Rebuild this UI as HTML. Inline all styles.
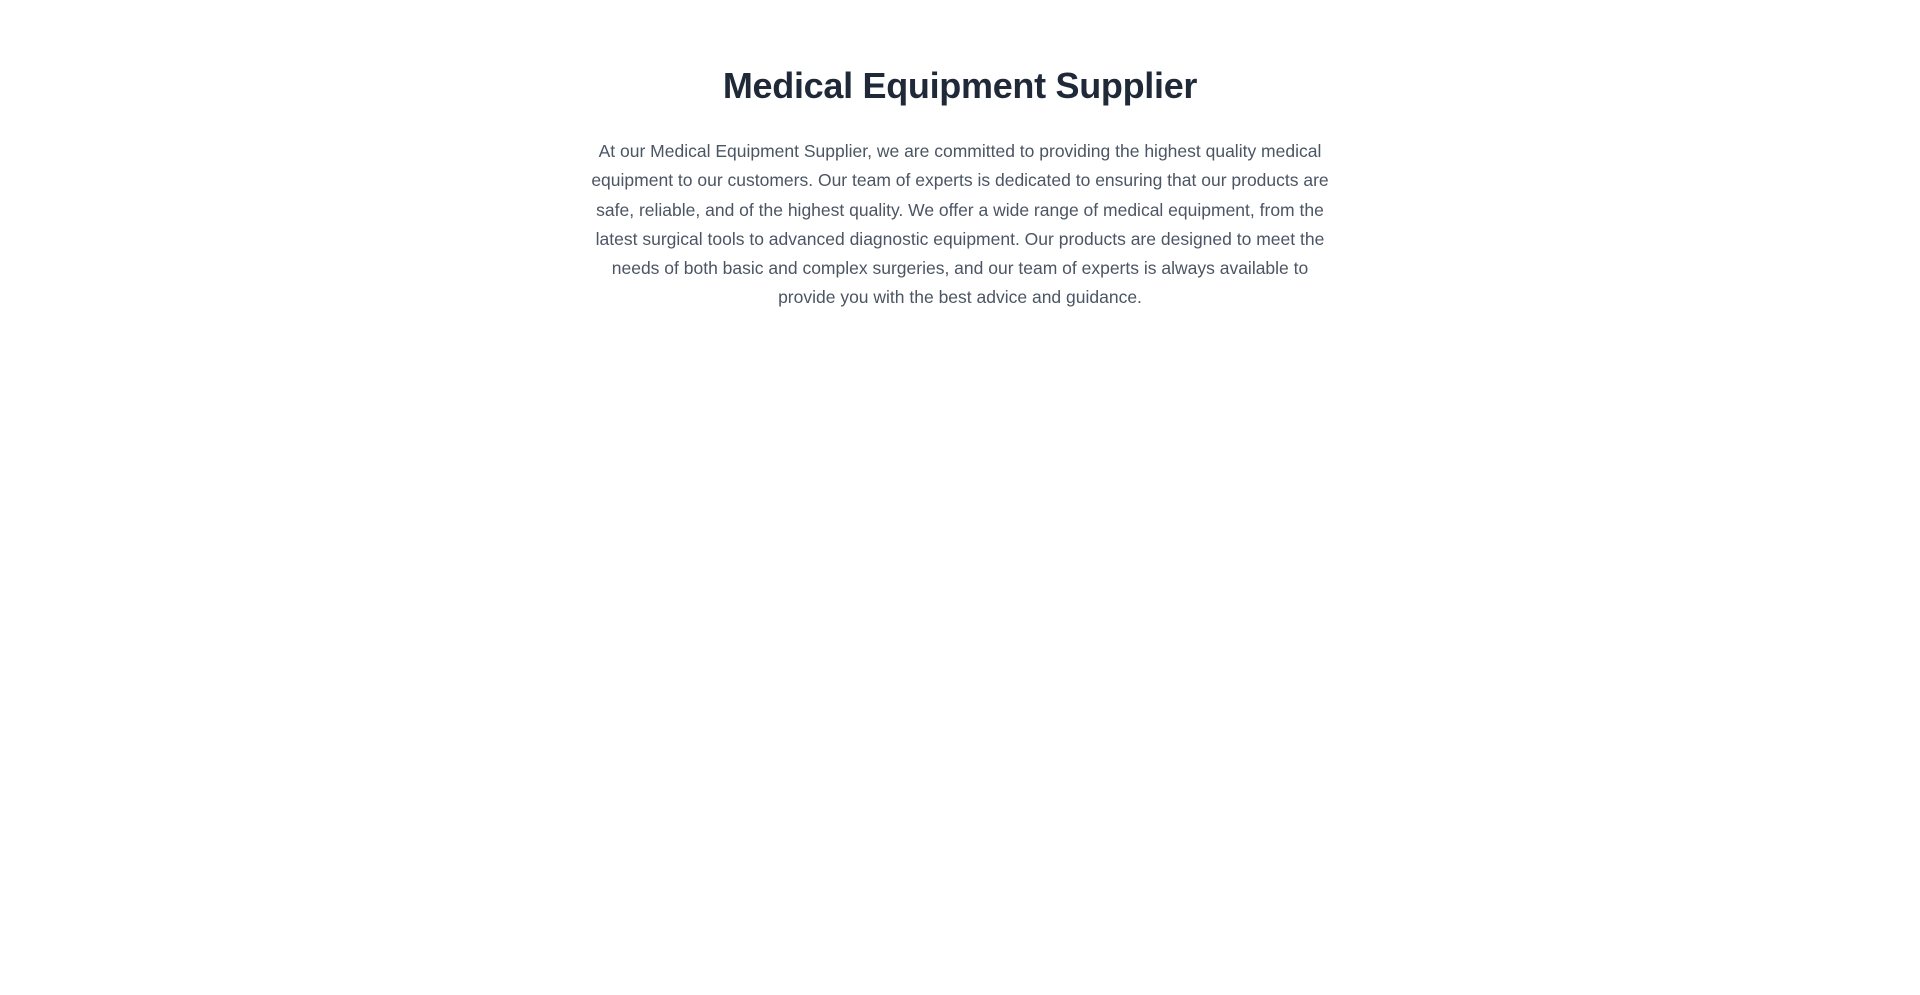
<!DOCTYPE html>
<html>
<head>
<meta charset="utf-8">
<style>
  html,body{margin:0;padding:0;background:#fff;width:1920px;height:995px;overflow:hidden;}
  body{font-family:"Liberation Sans",sans-serif;}
  .wrap{width:800px;margin:0 auto;padding-top:66px;text-align:center;}
  h1{margin:0;font-size:36px;line-height:40px;font-weight:700;color:#1f2937;letter-spacing:-0.3px;}
  p{margin:31px 0 0;font-size:17.5px;line-height:29.3px;color:#4b5563;white-space:nowrap;}
</style>
</head>
<body>
<div class="wrap">
  <h1>Medical Equipment Supplier</h1>
  <p>At our Medical Equipment Supplier, we are committed to providing the highest quality medical<br>equipment to our customers. Our team of experts is dedicated to ensuring that our products are<br>safe, reliable, and of the highest quality. We offer a wide range of medical equipment, from the<br>latest surgical tools to advanced diagnostic equipment. Our products are designed to meet the<br>needs of both basic and complex surgeries, and our team of experts is always available to<br>provide you with the best advice and guidance.</p>
</div>
</body>
</html>
